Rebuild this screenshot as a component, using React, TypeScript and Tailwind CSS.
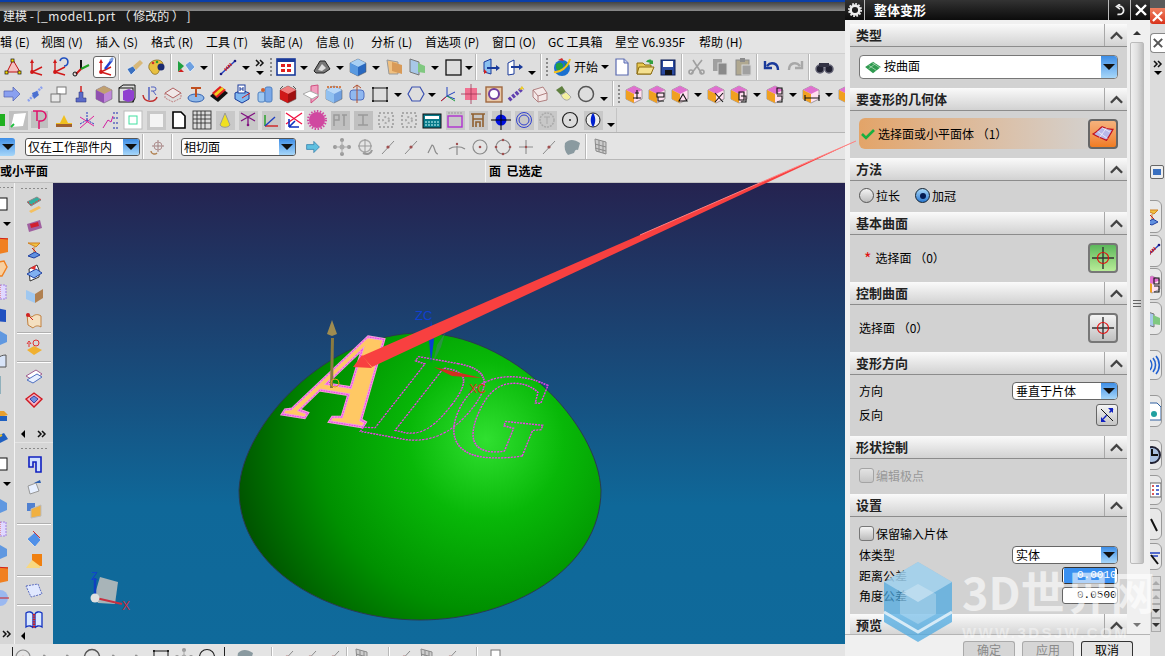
import { ReactNode } from "react";

const cube = (a: string, b: string, c: string) => (
  <>
    <path d="M10 2l8 4v9l-8 4-8-4V6z" fill={c} stroke="#555" strokeWidth=".5" />
    <path d="M10 2l8 4-8 4-8-4z" fill={a} />
    <path d="M2 6l8 4v9l-8-4z" fill={b} />
  </>
);
const axes = (c = "#d01818") => (
  <g stroke={c} strokeWidth="1.4" fill={c}>
    <path d="M6 15V4M6 15l10-5M6 15l10 3" fill="none" />
    <circle cx="6" cy="15" r="1.2" />
    <path d="M6 2l-2 4h4z" stroke="none" />
  </g>
);
const nxCube = (mark: ReactNode) => (
  <>
    {cube("#e070d0", "#f0a020", "#ffe0f0")}
    <g stroke="#111" strokeWidth="1.1" fill="none">{mark}</g>
  </>
);
const gray = "#8b8b8b";
const seg = (a: string) => (
  <>
    <path d="M4 17L16 4" stroke={a} strokeWidth="1" />
    <circle cx="10" cy="10" r="1.6" fill="#a05050" />
  </>
);

const icons: Record<string, ReactNode> = {
  wcs: (<><path d="M4 15L10 3l7 12z" fill="#f4c0c0" stroke="#c01010" /><g fill="#ffdd00" stroke="#111" strokeWidth=".7"><rect x="2" y="14" width="3" height="3" /><rect x="15" y="14" width="3" height="3" /><rect x="8" y="2" width="3" height="3" /></g></>),
  ax1: axes(),
  ax2: (<>{axes()}<path d="M11 4a4 4 0 1 1 4 5" stroke="#2050c0" strokeWidth="1.6" fill="none" /></>),
  ax3: (<><path d="M9 12V3" stroke="#111" strokeWidth="2" /><path d="M9 12l8-4" stroke="#20a020" strokeWidth="2" /><path d="M9 12l-5 5" stroke="#d01818" strokeWidth="2" /><circle cx="3" cy="17" r="2" fill="none" stroke="#111" /></>),
  ax4: (<>{axes()}<path d="M10 12l7-9" stroke="#2040d0" strokeWidth="2.5" /><path d="M15 4l3-3" stroke="#80a0e0" strokeWidth="2.5" /></>),
  pen: (<><path d="M3 12l6-3 3 4-5 5z" fill="#3a70c0" stroke="#fff" strokeWidth=".6" /><path d="M9 9l7-6 3 3-7 7z" fill="#d8b878" /></>),
  pal: (<><path d="M2 8c2-6 13-7 14-1 1 4-3 4-4 7-1 4-5 4-7 2-1-3-4-3-3-8z" fill="#e8c040" stroke="#806010" strokeWidth=".7" /><circle cx="14" cy="10" r="3.5" fill="#1a2a70" /><circle cx="6" cy="6" r="1.3" fill="#d03030" /><circle cx="10" cy="5" r="1.3" fill="#30a030" /></>),
  play: (<><path d="M2 4l6 5-6 6z" fill="#20a040" /><path d="M2 15l3-3 3 3z" fill="#d02020" /><path d="M9 8l5-4 5 6-5 5z" fill="#6ea0e0" stroke="#fff" strokeWidth=".6" /></>),
  lin: (<><path d="M3 17L17 4" stroke="#2040c0" strokeWidth="1.4" /><path d="M7 13l6-6" stroke="#d01818" strokeWidth="3" strokeDasharray="1.4 1" /><circle cx="3" cy="17" r="1.3" fill="#1a1a80" /><circle cx="17" cy="4" r="1.3" fill="#1a1a80" /></>),
  win: (<><rect x="1" y="2" width="18" height="16" fill="#fff" stroke="#1a3a9a" strokeWidth="1.6" /><rect x="1" y="2" width="18" height="3" fill="#1a3a9a" /><g fill="#e02020"><rect x="5" y="7" width="4" height="3" /><rect x="11" y="7" width="4" height="3" /><rect x="5" y="12" width="4" height="3" /><rect x="11" y="12" width="4" height="3" /></g></>),
  lay: (<><path d="M2 14l6-10h5l5 8-6 4H4z" fill="#777" stroke="#222" /><path d="M6 13l4-6 4 4-4 3z" fill="#ddd" /></>),
  bcube: cube("#a8d0f4", "#5a9ae0", "#2868c0"),
  tan: (<><path d="M3 3l11 2v12L5 17z" fill="#f0c080" stroke="#999" /><path d="M8 5l10 3v9l-10-3z" fill="#d89a58" /></>),
  gsh: (<><path d="M3 2l9 3v13l-9-3z" fill="#a8c8e8" stroke="#777" /><path d="M11 6l7 3v7l-7-1z" fill="#80c880" /></>),
  rect: (<rect x="3" y="3" width="15" height="15" fill="#ddd" stroke="#111" strokeWidth="1.3" />),
  fr1: (<><path d="M3 5l7-3v15l-7-2z" fill="#8ac0f0" stroke="#1a3a9a" /><path d="M6 11h10" stroke="#1a3a9a" strokeWidth="2" /><path d="M15 8l4 3-4 3z" fill="#1a3a9a" /><path d="M3 12l3 3-3 2z" fill="#d02020" /></>),
  fr2: (<><path d="M4 6l6-3v14l-6 1z" fill="#fff" stroke="#1a3a9a" /><path d="M7 10h9" stroke="#1a3a9a" strokeWidth="2" /><path d="M15 7l4 3-4 3z" fill="#1a3a9a" /></>),
  globe: (<><circle cx="10" cy="11" r="8" fill="#1a70d0" /><path d="M4 7c5-3 9 0 6 5-2 3-5 2-6-1zM12 5l5 4-3 2z" fill="#20a040" /><path d="M2 15C8 16 16 10 18 2" stroke="#f0c020" strokeWidth="2" fill="none" /><path d="M6 3l4-2 2 3z" fill="#d03030" /></>),
  doc: (<><path d="M4 2h8l4 4v12H4z" fill="#fff" stroke="#5a6ab0" strokeWidth="1.2" /><path d="M12 2v4h4" fill="#c8d0f0" stroke="#5a6ab0" /></>),
  fold: (<><path d="M2 6h6l2 2h6v9H2z" fill="#e8c850" stroke="#8a6a10" /><path d="M4 10h15l-3 7H2z" fill="#f4e090" stroke="#8a6a10" /><path d="M11 5c2-3 5-3 6-1l1-1v4h-4l1-1c-1-1-3-1-4-1z" fill="#30a040" /></>),
  save: (<><rect x="3" y="3" width="14" height="15" fill="#2a4aa0" stroke="#0a1a50" /><rect x="5" y="4" width="10" height="6" fill="#fff" /><rect x="7" y="13" width="7" height="5" fill="#111" /></>),
  cut: (<g stroke="#a0a0a0" strokeWidth="1.6" fill="none"><path d="M4 17L15 3M15 17L6 3" /><circle cx="4" cy="15" r="2" /><circle cx="15" cy="15" r="2" /></g>),
  copy: (<><rect x="3" y="2" width="9" height="12" fill="#a0a0a0" /><rect x="8" y="6" width="9" height="12" fill="#8a8a8a" stroke="#d8d8d8" /></>),
  paste: (<><rect x="3" y="3" width="13" height="15" fill="#b0a890" stroke="#8a8a8a" /><rect x="7" y="1" width="5" height="4" fill="#8a8a8a" /><rect x="9" y="8" width="9" height="10" fill="#a0a0a0" stroke="#d8d8d8" /></>),
  undo: (<path d="M5 9c4-5 11-3 11 4M3 4v7h7" stroke="#1a3a9a" strokeWidth="2.4" fill="none" />),
  redo: (<path d="M15 9c-4-5-11-3-11 4M17 4v7h-7" stroke="#a8a8a8" strokeWidth="2.4" fill="none" />),
  bino: (<><circle cx="6" cy="12" r="4" fill="#223" stroke="#667" strokeWidth="1.5" /><circle cx="15" cy="12" r="4" fill="#223" stroke="#667" strokeWidth="1.5" /><path d="M5 6h10v4H5z" fill="#334" /></>),
  arrow: (<path d="M2 7h9V3l7 7-7 7v-4H2z" fill="#8aa0f0" stroke="#5060b0" strokeWidth=".7" />),
  dia: (<><path d="M3 17L17 3" stroke="#8aa0f0" strokeWidth="2.5" strokeDasharray="2 1" /><path d="M7 9l5-2 2 4-5 4z" fill="#4a70d0" /></>),
  sq2: (<><rect x="9" y="3" width="9" height="7" fill="#fff" stroke="#777" /><rect x="3" y="10" width="9" height="8" fill="#e8e8e8" stroke="#777" /></>),
  ped: (<><path d="M5 18v-4h3V8h4v6h3v4z" fill="#5a6ac8" stroke="#333a80" strokeWidth=".6" /><path d="M10 8V2" stroke="#d02020" strokeWidth="1.5" /></>),
  pur: cube("#c0a070", "#9050b0", "#c088d8"),
  purf: (<><rect x="2" y="4" width="14" height="14" fill="none" stroke="#111" /><path d="M6 7l6-2 5 2v9l-6 2-5-2z" fill="#9040d0" /><path d="M2 4l4-3h12v13l-2 4" fill="none" stroke="#111" /></>),
  arc: (<><path d="M3 11c1 8 12 8 14 2" stroke="#c03030" strokeWidth="1.5" fill="none" /><path d="M9 16V3" stroke="#5060c0" strokeWidth="1.5" /><path d="M11 3h3a2 2 0 0 1 0 4h-3m2 0l3 4" stroke="#5060c0" fill="none" /></>),
  hat: (<><path d="M2 9l8-5 8 5-8 5z" fill="#f0e8e8" stroke="#b06060" /><path d="M2 9v5l8 4 8-4V9" fill="none" stroke="#c08080" strokeDasharray="2 1" /></>),
  rev: (<><ellipse cx="10" cy="14" rx="8" ry="4" fill="#90b8e8" stroke="#3060b0" /><path d="M10 13V4M5 4h10" stroke="#c05020" strokeWidth="2" /></>),
  strip: (<><path d="M1 12l10-9 8 6-10 9z" fill="#111" /><path d="M3 9l8-7 6 4-9 8z" fill="#e02020" /><path d="M5 10l8-7 2 2-8 7z" fill="#f0d020" /></>),
  bh: (<><path d="M3 9l7-3 7 3v6l-7 4-7-4z" fill="#80b8f0" stroke="#1a3a9a" /><rect x="6" y="1" width="7" height="8" fill="#fff" stroke="#1a3a9a" /><path d="M8 3v4M11 3v4M8 5h3" stroke="#1a3a9a" /><path d="M10 14l8-5" stroke="#d02020" /></>),
  cyl: (<><rect x="3" y="8" width="7" height="10" rx="2" fill="#a0c8f0" stroke="#5080c0" /><rect x="10" y="3" width="7" height="15" rx="2" fill="#7aa8e8" stroke="#5080c0" /><circle cx="8" cy="6" r="2" fill="#d06030" /></>),
  rcube: (<>{cube("#f08080", "#d01818", "#a01010")}<path d="M2 5l3-3M18 5l-3-3" stroke="#555" /></>),
  pln: (<><path d="M10 2l7-1v12l-7 6z" fill="#f0a0c0" stroke="#d05080" /><path d="M2 10l7-3 9 4-7 4z" fill="#fff" stroke="#aaa" /></>),
  dim: (<>{cube("#b8d8f8", "#90c0f0", "#70a0e0")}<path d="M3 3h14" stroke="#d06020" strokeWidth="1.3" strokeDasharray="2 1" /></>),
  cdim: (<><rect x="3" y="6" width="14" height="10" rx="3" fill="#90b8f0" stroke="#5070c0" /><path d="M10 1v18M6 4l4-3 4 3" stroke="#b05030" fill="none" /></>),
  sqk: (<><rect x="3" y="4" width="14" height="13" fill="none" stroke="#444" strokeWidth="1.3" /><g fill="#222"><rect x="2" y="3" width="2" height="2" /><rect x="16" y="3" width="2" height="2" /><rect x="2" y="16" width="2" height="2" /><rect x="16" y="16" width="2" height="2" /></g></>),
  hex: (<path d="M6 3h8l4 7-4 7H6l-4-7z" fill="none" stroke="#3a50b0" strokeWidth="1.2" />),
  xyz: (<><path d="M9 12V3M9 12l8 3M9 12l-6 5M9 12l8-4" stroke="#2040c0" /><path d="M3 17l5-4" stroke="#d02020" /><path d="M9 12l8 5" stroke="#20a040" /></>),
  pk: (<><rect x="4" y="4" width="12" height="12" fill="#f07090" /><path d="M10 0v20M0 10h20" stroke="#a03050" strokeWidth=".8" /></>),
  rc: (<><rect x="2" y="3" width="16" height="15" fill="#e8c8a8" stroke="#a06840" strokeWidth="1.4" /><circle cx="10" cy="10" r="5" fill="#fff" stroke="#7040a0" strokeWidth="2" /></>),
  vi: (<><path d="M2 16L16 4" stroke="#6040b0" strokeWidth="4" strokeDasharray="3 1.5" /><path d="M12 6l3-4 2 3z" fill="#f0d020" /></>),
  bx: (<><path d="M3 6l10-3 4 6v7l-9 2-5-5z" fill="#f4e8e8" stroke="#b08080" /><path d="M3 6l5 6v6M8 12l9-3" stroke="#b08080" fill="none" /></>),
  bulb: (<><path d="M3 6l6-4 4 6-5 3z" fill="#608040" /><path d="M8 11l5-3 5 5c-2 4-7 5-10-2z" fill="#f4f0a0" stroke="#aaa" /></>),
  circ: (<circle cx="10" cy="10" r="7.5" fill="none" stroke="#555" strokeWidth="1.5" />),
  c1: nxCube(<path d="M13 6v9M9 14h8M11 9h4" />),
  c2: nxCube(<path d="M10 9h7v4h-7zM11 13v4h6" />),
  c3: nxCube(<path d="M9 17l4-7 4 7z" />),
  c4: nxCube(<path d="M9 9l8 9M17 9l-8 9" />),
  c5: nxCube(<path d="M10 8h5v8h-5zM12 12h5v6h-5" />),
  c6: nxCube(<path d="M12 4h5v6h-5zM12 12h5v6h-5" />),
  c7: nxCube(<path d="M4 14h14M4 11v6M18 11v6" />),
  gsq: (<path d="M15 4h5v12h-5z" fill="#20b020" />),
  gplane: (<><rect x="1" y="1" width="19" height="19" fill="#c0c0c0" /><path d="M3 17l12-1 3-13-12 1z" fill="#fff" /><path d="M3 17l3-3" stroke="#20c040" strokeWidth="2" /></>),
  pp: (<><rect x="0" y="1" width="17" height="17" fill="#c0c0c0" /><path d="M2 1h8a5 5 0 0 1 0 10H8v8M6 1v10" fill="none" stroke="#e0106a" strokeWidth="1.5" /></>),
  mnd: (<><path d="M2 16h16v-3H2zM6 13l4-8 4 8z" fill="#f0c020" /><rect x="2" y="14" width="16" height="3" fill="#a06030" /></>),
  dtr: (<><path d="M10 10V2M10 10l-7 4M10 10l7 4" stroke="#2030c0" strokeDasharray="2 1" /><path d="M3 7l14 9M3 18L17 6" stroke="#e0209a" /></>),
  drs: (<><path d="M3 18l5-8 3 2 2-6" stroke="#d020a0" fill="none" /><g stroke="#1a2ab0" strokeDasharray="2 1"><path d="M13 3h6M13 8h6M13 13h6M13 18h6" /></g></>),
  gbox: (<><rect x="1" y="1" width="18" height="18" fill="#fff" stroke="#bbb" /><rect x="6" y="6" width="8" height="8" fill="none" stroke="#40e0a0" /></>),
  gcube: (<><rect x="1" y="1" width="19" height="19" fill="#c8c8c8" /><rect x="4" y="4" width="13" height="13" fill="#f4f4f4" /></>),
  page: (<path d="M4 2h8l4 4v12H4z" fill="#fff" stroke="#000" strokeWidth="1.6" />),
  grid: (<g stroke="#333" strokeWidth=".9" fill="none"><rect x="1" y="1" width="18" height="18" /><path d="M5 1v18M9 1v18M13 1v18M1 5h18M1 9h18M1 13h18" /></g>),
  ycone: (<><rect x="1" y="1" width="19" height="19" fill="#c8c8c8" /><path d="M10 3l5 12c-2 3-8 3-10 0z" fill="#f0e020" stroke="#999" /></>),
  xpt: (<><rect x="1" y="1" width="19" height="19" fill="#c8c8c8" /><path d="M3 3l14 8M17 3L3 11M10 7v9" stroke="#801080" strokeWidth="1.3" /><circle cx="10" cy="15" r="1.3" fill="#801080" /></>),
  tri: (<><rect x="1" y="1" width="19" height="19" fill="#c8c8c8" /><path d="M4 16V5" stroke="#20a020" strokeWidth="1.4" /><path d="M4 16h13" stroke="#d02020" strokeWidth="1.4" /><path d="M4 16l10-9" stroke="#2040c0" strokeWidth="1.4" /></>),
  rbx: (<><rect x="1" y="1" width="19" height="19" fill="#fff" /><path d="M2 3l16 11M18 3L2 14" stroke="#f01040" strokeWidth="1.3" /><path d="M5 17l6-6M5 17h10M5 9v8" stroke="#1030c0" strokeWidth="1.6" /></>),
  gear: (<><circle cx="10" cy="10" r="8" fill="#d048a0" /><circle cx="10" cy="10" r="9" fill="none" stroke="#d048a0" strokeWidth="2" strokeDasharray="1.5 1.5" /></>),
  gA: (<><rect x="1" y="1" width="19" height="19" fill="#c0c0c0" /><path d="M4 16V5h5v5H4M12 5h5M14 5v11" stroke="#999" strokeWidth="1.5" fill="none" /></>),
  gB: (<><rect x="1" y="1" width="19" height="19" fill="#c0c0c0" /><path d="M5 5h10M5 15h10M10 5v10" stroke="#999" strokeWidth="1.5" /></>),
  gC: (<g stroke="#aaa" strokeWidth="2" strokeDasharray="2 2" fill="none"><rect x="3" y="3" width="14" height="14" /><circle cx="10" cy="10" r="3" /></g>),
  calc: (<><rect x="1" y="4" width="18" height="14" fill="#087a8a" stroke="#111" /><rect x="3" y="6" width="14" height="3" fill="#fff" /><path d="M3 12h14M3 15h14" stroke="#cff" strokeDasharray="2 1" /></>),
  prect: (<><rect x="1" y="1" width="19" height="19" fill="#c8c8c8" /><path d="M3 3h14" stroke="#999" strokeDasharray="2 1" /><rect x="3" y="6" width="14" height="11" fill="none" stroke="#b030d0" strokeWidth="1.4" /></>),
  gate: (<><rect x="1" y="1" width="19" height="19" fill="#c8c8c8" /><path d="M3 4h14M5 4v13M15 4v13M5 9h10M8 17v-5h4v5" stroke="#906030" strokeWidth="1.6" fill="none" /></>),
  bdot: (<><rect x="1" y="1" width="19" height="19" fill="#c8c8c8" /><circle cx="10" cy="10" r="5.5" fill="#0010e0" /><path d="M10 0v20M0 10h20" stroke="#000" /></>),
  bring: (<><rect x="1" y="1" width="19" height="19" fill="#c8c8c8" /><circle cx="10" cy="10" r="7.5" fill="none" stroke="#3040d0" /><circle cx="10" cy="10" r="5" fill="none" stroke="#3040d0" /></>),
  gring: (<><rect x="1" y="1" width="19" height="19" fill="#c8c8c8" /><circle cx="10" cy="10" r="7" fill="none" stroke="#aaa" strokeWidth="1.5" strokeDasharray="2 1" /><path d="M7 7h6M10 7v7" stroke="#aaa" /></>),
  cdot: (<><circle cx="10" cy="10" r="7.5" fill="none" stroke="#222" strokeWidth="1.2" /><circle cx="10" cy="10" r="1" fill="#222" /></>),
  lens: (<><rect x="1" y="1" width="19" height="19" fill="#c8c8c8" /><circle cx="10" cy="10" r="7" fill="#eee" stroke="#222" /><path d="M10 3c3 4 3 10 0 14-3-4-3-10 0-14z" fill="#0020d0" /></>),
  sm: (<><circle cx="10" cy="10" r="2.5" fill="#aaa" /><g fill="#999"><circle cx="10" cy="3" r="2" /><circle cx="10" cy="17" r="2" /><circle cx="3" cy="10" r="2" /><circle cx="17" cy="10" r="2" /></g><path d="M10 3v14M3 10h14" stroke="#aaa" /></>),
  sm2: (<><circle cx="10" cy="9" r="6" fill="none" stroke="#aaa" strokeWidth="1.5" /><path d="M10 2v14M3 9h14" stroke="#999" /><path d="M8 16c4 2 8 1 9-3" stroke="#999" fill="none" strokeWidth="2" /></>),
  seg: seg(gray),
  cpt: (<><path d="M4 16l4-8c3 0 2 9 6 9" stroke={gray} fill="none" strokeWidth="1.2" /></>),
  tee: (<><path d="M2 12c4-3 12-3 16 0M10 9v9" stroke={gray} fill="none" strokeWidth="1.2" /><circle cx="10" cy="7" r="1.2" fill="#a05050" /></>),
  c2p: (<><circle cx="10" cy="10" r="7" fill="none" stroke={gray} strokeWidth="1.2" /><circle cx="10" cy="10" r="1.3" fill="#a05050" /></>),
  c4p: (<><circle cx="10" cy="10" r="7" fill="none" stroke={gray} strokeWidth="1.2" /><g fill="#a05050"><circle cx="10" cy="3" r="1.3" /><circle cx="10" cy="17" r="1.3" /><circle cx="3" cy="10" r="1.3" /><circle cx="17" cy="10" r="1.3" /></g></>),
  plus: (<><path d="M10 3v14M3 10h14" stroke={gray} strokeWidth="1.1" /><circle cx="10" cy="10" r="1.2" fill="#a05050" /></>),
  srf: (<path d="M3 6c4-4 9-4 15 0l-2 7c-2-1-3 0-4 3l-6 2c-3-3-4-7-3-12z" fill="#8a9aa0" />),
  gr: (<g stroke={gray} fill="#ccc"><path d="M4 2l11 3v12L5 14z" /><path d="M8 3v12M12 4v12M4 7l11 3M4 11l11 3" fill="none" /></g>),
  cen: (<><path d="M10 3v12M4 9h12" stroke="#a08080" /><circle cx="10" cy="9" r="4" fill="none" stroke="#b09090" /><path d="M3 14c0 3 4 4 6 2" stroke="#b08050" fill="none" strokeWidth="1.4" /></>),
  sa: (<><path d="M3 8l10-5 4 3-10 6z" fill="#30b0a0" stroke="#888" /><path d="M4 8l3 3 10-6" stroke="#e04040" strokeDasharray="2 1" fill="none" /><path d="M5 17l10-5 2 2-10 5z" fill="#f4c060" /></>),
  sb: (<><path d="M3 7l13-4 2 8-13 4z" fill="#a060a0" /><path d="M6 7l8-2 1 4-8 2z" fill="#d02030" /></>),
  sc: (<><path d="M4 3h12l-4 4zM10 7v6" fill="#f0c040" stroke="#d08020" /><path d="M4 16l7-4 5 3-6 3z" fill="#6090e0" stroke="#2040a0" /><path d="M8 8l4 4" stroke="#d02020" /></>),
  sd: (<><path d="M5 6l8-4 2 5v7l-9 4z" fill="#fff" stroke="#333" /><path d="M3 11l9-5 6 4-8 5z" fill="#80b0f0" stroke="#2040a0" /><path d="M6 5l6-3-1 5z" fill="#e03030" /></>),
  se: (<><path d="M2 4l9 4v9l-9-4z" fill="#a0c8f0" /><path d="M11 8l8-5v9l-8 5z" fill="#b08050" /></>),
  sf: (<><path d="M3 5l5 3c3-3 6-3 9-1v11c-3-2-6-1-8 1l-5-3z" fill="#f4e0c0" stroke="#c08040" /><circle cx="4" cy="6" r="2" fill="#d02020" /><path d="M4 6l5 5" stroke="#d02020" /></>),
  sg: (<><circle cx="12" cy="5" r="3" fill="none" stroke="#e03030" /><path d="M3 12l7-4 8 4-8 5z" fill="#f0b030" /><path d="M5 9V5M3 6l2-3 2 3" stroke="#e03030" fill="none" /></>),
  sh: (<><path d="M2 9l10-6 6 4-9 6z" fill="#fff" stroke="#a06090" /><path d="M3 13l10-6 5 3-9 6z" fill="#e8f0ff" stroke="#5070c0" /></>),
  si: (<><path d="M2 9l8-6 8 6-8 8z" fill="#f4b0c0" stroke="#d01820" strokeWidth="1.4" /><path d="M6 9l4-3 4 3-4 4z" fill="#7090e0" stroke="#4040a0" /></>),
  u1: (<path d="M5 3h12v15h-5V8H9v5H5z" fill="#d0e0ff" stroke="#1020c0" strokeWidth="1.6" />),
  u2: (<><path d="M4 9l8-3 3 8-9 3z" fill="#e8f0ff" stroke="#999" /><path d="M10 6l6-3 1 3z" fill="#3060b0" /></>),
  u3: (<><rect x="3" y="3" width="8" height="8" fill="#5080d0" /><path d="M7 9l10-4v11l-10 2z" fill="#f0b040" stroke="#bbb" /></>),
  u4: (<><path d="M3 10l8-7 6 8-6 7z" fill="#5090e8" stroke="#ddd" /><path d="M9 2l7 7" stroke="#d03030" strokeWidth="1" /></>),
  u5: (<><path d="M8 2h10v12H8z" fill="#f08010" /><path d="M2 16l6-8 8 6v2z" fill="#f8d880" /></>),
  u6: (<><path d="M2 5l12-2 4 10-11 3z" fill="#e0e8ff" stroke="#6070c0" strokeDasharray="2 1" /></>),
  book: (<><path d="M2 3c3-2 6-1 7 1v14c-1-2-4-3-7-1zM18 3c-3-2-6-1-7 1v14c1-2 4-3 7-1z" fill="#d8e8ff" stroke="#1030c0" strokeWidth="1.3" /><path d="M10 4v14" stroke="#d01818" strokeWidth="2.4" strokeDasharray="1.4 1" /></>),
  o1: (<><path d="M6 2h12v14l-9 2-4-4z" fill="#f08020" /><path d="M6 2l12 1" stroke="#d02020" /></>),
  o2: (<><path d="M4 4l10-2 3 6-5 9H6z" fill="#f8d0a0" stroke="#f08020" strokeWidth="1.4" /></>),
  o3: (<><rect x="4" y="3" width="12" height="14" fill="#e0d8ff" stroke="#a080e0" strokeDasharray="2 1" /><path d="M10 3v14" stroke="#e05050" strokeDasharray="1 1" /></>),
  o4: (<path d="M6 3l10 2v12l-10-1z" fill="#2050c0" />),
  o5: (<path d="M8 2l9 5v7l-9 4-6-6z" fill="#6098e0" />),
  o6: (<><path d="M4 16c0-8 6-12 12-12v12z" fill="#d8e4f8" stroke="#555" /></>),
  o7: (<><path d="M8 2v18" stroke="#4a8aa0" strokeWidth="5" /></>),
  o8: (<><path d="M2 4h12l4 4-8 2z" fill="#e8a030" /><rect x="9" y="9" width="8" height="5" fill="#2060c0" /></>),
  o9: (<><path d="M2 8l12-5 4 6-14 7z" fill="#2060c0" /><path d="M6 8l6-3" stroke="#f0c020" strokeWidth="2" /></>),
  o10: (<rect x="5" y="5" width="12" height="12" fill="#fff" stroke="#111" />),
  o11: (<><circle cx="10" cy="10" r="8" fill="#9ab8f0" /><path d="M5 10h14" stroke="#d02020" /></>),
};

function Icon({ k }: { k: string }) {
  return (
    <svg viewBox="0 0 20 20" className="h-[20px] w-[20px] shrink-0">
      {icons[k]}
    </svg>
  );
}

function Drop() {
  return <div className="h-0 w-0 border-x-[4px] border-t-[4px] border-x-transparent border-t-black" />;
}

function Chevrons() {
  return (
    <svg viewBox="0 0 10 8" className="h-[8px] w-[10px]">
      <path d="M1 1l3 3-3 3M5 1l3 3-3 3" fill="none" stroke="#111" strokeWidth="1.5" />
    </svg>
  );
}

// token row: icon name, "v" dropdown, "|" separator, ":" grip
function Row({ items }: { items: string[] }) {
  return (
    <>
      {items.map((t, i) => {
        if (t === "v")
          return (
            <div key={i} className="flex h-full w-[13px] shrink-0 items-center justify-center pt-[2px]">
              <Drop />
            </div>
          );
        if (t === "vs")
          return (
            <div key={i} className="flex h-full w-[9px] shrink-0 items-center justify-center pt-[2px]">
              <Drop />
            </div>
          );
        if (t === "v2")
          return (
            <div key={i} className="flex h-full w-[13px] shrink-0 items-end justify-center pb-[5px]">
              <Drop />
            </div>
          );
        if (t === "|")
          return <div key={i} className="mx-[2px] h-full w-[2px] shrink-0 border-x border-l-[#b8b8b8] border-r-white" />;
        if (t === ":")
          return (
            <div key={i} className="mx-[2px] flex h-full w-[2px] shrink-0 flex-col justify-center gap-[2px]">
              {[0, 1, 2, 3, 4].map((d) => (
                <div key={d} className="h-[2px] w-[2px] bg-[#8a8a8a]" />
              ))}
            </div>
          );
        if (t === ">>")
          return (
            <div key={i} className="flex h-full w-[16px] shrink-0 flex-col items-center justify-center gap-[4px]">
              <Chevrons />
              <Drop />
            </div>
          );
        if (t === "sel")
          return (
            <div key={i} className="flex h-[22px] w-[23px] shrink-0 items-center justify-center rounded-[3px] border border-[#666] bg-white">
              <Icon k="ax4" />
            </div>
          );
        if (t === "start")
          return (
            <div key={i} className="flex h-full w-[37px] shrink-0 items-center gap-[3px] whitespace-nowrap pl-[1px] text-[12px] text-black">
              开始
              <Drop />
            </div>
          );
        return (
          <div key={i} className="flex h-full w-[23px] shrink-0 items-center justify-center">
            <Icon k={t} />
          </div>
        );
      })}
    </>
  );
}

function TopSelect({ label, width }: { label: string; width: string }) {
  return (
    <div className={`flex h-[18px] ${width} shrink-0 overflow-hidden rounded-[3px] border border-[#555] bg-white`}>
      <span className="flex-1 pl-[2px] text-[12px] leading-[15px] text-black">{label}</span>
      <BlueBtn />
    </div>
  );
}

function BlueBtn() {
  return (
    <div className="flex h-full w-[16px] shrink-0 items-center justify-center bg-gradient-to-b from-[#3d8ee6] to-[#a6d6f8]">
      <div className="h-0 w-0 border-x-[6px] border-t-[6px] border-x-transparent border-t-[#111]" />
    </div>
  );
}

const menus: [string, string][] = [
  ["辑 (E)", "w-[41px]"],
  ["视图 (V)", "w-[55px]"],
  ["插入 (S)", "w-[55px]"],
  ["格式 (R)", "w-[55px]"],
  ["工具 (T)", "w-[55px]"],
  ["装配 (A)", "w-[55px]"],
  ["信息 (I)", "w-[55px]"],
  ["分析 (L)", "w-[54px]"],
  ["首选项 (P)", "w-[67px]"],
  ["窗口 (O)", "w-[56px]"],
  ["GC 工具箱", "w-[67px]"],
  ["星空 V6.935F", "w-[84px]"],
  ["帮助 (H)", "w-[60px]"],
];

const row1 = ["wcs", "ax1", "ax2", "ax3", "sel", "|", "pen", "pal", "|", "play", "v", "|", "lin", "v", ">>", ":", "win", "v", "lay", "v", "bcube", "v", "tan", "gsh", "v", "rect", "vs", "|", "fr1", "fr2", "v2", "|", ":", "globe", "start", "doc", "fold", "save", "|", "cut", "copy", "paste", "|", "undo", "redo", "|", "bino"];
const row2 = ["arrow", "dia", "sq2", "ped", "pur", "purf", "arc", "hat", "rev", "strip", "bh", "cyl", "rcube", "pln", "dim", "cdim", "sqk", "v", "hex", "vs", "xyz", "pk", "rc", "vi", "bx", "bulb", "circ", "v2", "|", ":", "c1", "c2", "c3", "v", "c4", "c5", "v", "c6", "v", "c7", "v", "c1"];
const row3 = ["gsq", "gplane", "pp", "mnd", "dtr", "drs", "gbox", "gcube", "page", "grid", "ycone", "xpt", "tri", "rbx", "gear", "gA", "gB", "gC", "gC", "calc", "prect", "gate", "bdot", "bring", "gring", "cdot", "lens", "v2"];
const row4 = ["sm", "sm2", "seg", "seg", "cpt", "tee", "c2p", "c4p", "plus", "seg", "srf", "|", "gr"];
const sideA = ["sa", "sb", "sc", "sd", "se", "sf"];
const sideB = ["u1", "u2", "u3"];

function VIcons({ items }: { items: string[] }) {
  return (
    <>
      {items.map((k, i) => (
        <div key={i} className="flex h-[23px] w-full items-center justify-center">
          <Icon k={k} />
        </div>
      ))}
    </>
  );
}

function HLine() {
  return <div className="mx-[1px] my-[2px] h-[2px] border-y border-t-[#b0b0b0] border-b-white" />;
}

function Grip() {
  return (
    <div className="flex h-[8px] items-center justify-center gap-[2px]">
      {[0, 1, 2, 3, 4, 5, 6].map((d) => (
        <div key={d} className="h-[1px] w-[2px] bg-[#8a8a8a]" />
      ))}
    </div>
  );
}

function LeftBar() {
  return (
    <div className="flex h-full w-[53px] shrink-0 bg-[#e4e4e4]">
      {/* clipped toolbar on the far left */}
      <div className="relative w-[15px] shrink-0 overflow-hidden border-r border-[#f4f4f4] bg-[#d6d6d6]">
        <div className="-ml-[12px] flex h-full w-[24px] flex-col items-center">
          <Grip />
          <VIcons items={["o10"]} />
          <div className="flex h-[20px] items-center pl-[14px]"><Drop /></div>
          <VIcons items={["o1", "o2", "o3", "o4", "o5", "o6", "o7"]} />
          <HLine />
          <div className="h-[4px]" />
          <VIcons items={["o8", "o9", "o10"]} />
          <div className="flex h-[20px] items-center pl-[14px]"><Drop /></div>
          <VIcons items={["o5", "o3", "o5", "o1", "o11"]} />
          <div className="mt-auto flex h-[20px] items-center pl-[14px]"><Chevrons /></div>
        </div>
      </div>
      <div className="flex w-[38px] shrink-0 flex-col gap-[1px]">
        <div className="flex h-[259px] shrink-0 flex-col bg-[#d6d6d6] px-[1px] pt-[1px]">
          <Grip />
          <VIcons items={sideA} />
          <HLine />
          <VIcons items={["sg"]} />
          <HLine />
          <VIcons items={["sh", "si"]} />
          <div className="mt-auto flex items-center justify-between px-[5px] pb-[4px]">
            <div className="h-0 w-0 border-y-[4px] border-r-[4px] border-y-transparent border-r-black" />
            <Chevrons />
          </div>
        </div>
        <div className="flex flex-1 flex-col bg-[#d6d6d6] px-[1px] pt-[1px]">
          <Grip />
          <VIcons items={sideB} />
          <HLine />
          <VIcons items={["u4", "u5"]} />
          <HLine />
          <VIcons items={["u6"]} />
          <HLine />
          <VIcons items={["book"]} />
          <div className="mt-auto flex items-center px-[5px] pb-[4px]">
            <div className="h-0 w-0 border-y-[4px] border-r-[4px] border-y-transparent border-r-black" />
          </div>
        </div>
      </div>
    </div>
  );
}

function Scene() {
  const letter = "#f03cf0";
  return (
    <svg viewBox="53 183 792 461" className="block h-full w-full">
      <defs>
        <linearGradient id="sky" x1="0" y1="0" x2="0" y2="1">
          <stop offset="0" stopColor="#252350" />
          <stop offset="0.7" stopColor="#0f6899" />
          <stop offset="1" stopColor="#0f6a9b" />
        </linearGradient>
        <radialGradient id="dome" gradientUnits="userSpaceOnUse" cx="486" cy="440" r="260">
          <stop offset="0" stopColor="#30e030" />
          <stop offset="0.3" stopColor="#08b808" />
          <stop offset="0.65" stopColor="#009000" />
          <stop offset="1" stopColor="#005000" />
        </radialGradient>
      </defs>
      <rect x="53" y="183" width="792" height="461" fill="url(#sky)" />
      <path
        d="M239 490C242 424 328 333 420 333C512 333 598 424 601 490C601 570 510 620 420 620C330 620 239 570 239 490Z"
        fill="url(#dome)"
        stroke="#2a3a50"
      />
      {/* letters lying on the dome */}
      <g fontFamily="Liberation Serif, serif" fontWeight="700">
        <text
          transform="translate(281 414) rotate(9) skewX(-24) scale(.85 1)"
          fontSize="136"
          fill="#ffc864"
          stroke="#f4a0d8"
          strokeWidth="3"
        >
          A
        </text>
        <text
          transform="translate(281 414) rotate(9) skewX(-24) scale(.85 1)"
          fontSize="136"
          fill="none"
          stroke={letter}
          strokeWidth="1"
          strokeDasharray="2 1"
        >
          A
        </text>
        <text
          transform="translate(358 431) rotate(10) skewX(-28)"
          fontSize="128"
          fill="none"
          stroke={letter}
          strokeWidth="1.4"
          strokeDasharray="2 1"
        >
          D
        </text>
        <text
          transform="translate(436 451) rotate(6) skewX(-16)"
          fontSize="124"
          fill="none"
          stroke={letter}
          strokeWidth="1.4"
          strokeDasharray="2 1"
        >
          G
        </text>
      </g>
      {/* work triad */}
      <path d="M431 320l3 20-3 23-2-23z" fill="#0a3ed0" />
      <path d="M445 333l-4 14-8 16 4-18z" fill="#3a8a5a" opacity=".7" />
      <path d="M434 367l48 11-30-2z" fill="#d03020" />
      <text x="415" y="320" fontFamily="Liberation Sans, sans-serif" fontSize="13" fill="#1040d0">ZC</text>
      <text x="469" y="393" fontFamily="Liberation Sans, sans-serif" fontSize="12" fill="#d04010">XC</text>
      {/* brown direction arrow */}
      <path d="M330 388l1-50 3 0-1 50z" fill="#8a7a40" />
      <path d="M332 320l5 14-5 2-5-2z" fill="#a08c50" />
      <circle cx="335" cy="383" r="4" fill="none" stroke="#e0a020" />
      {/* corner triad */}
      <path d="M100 577l18 5-3 22-17-1-4-6z" fill="#a8b4b8" />
      <path d="M95 597V578" stroke="#1040c0" strokeWidth="2.5" />
      <path d="M96 598l26 6" stroke="#c83040" strokeWidth="2" />
      <circle cx="95" cy="598" r="4.5" fill="#e0e0e0" />
      <text x="91" y="580" fontFamily="Liberation Sans, sans-serif" fontSize="11" fill="#1040d0">Z</text>
      <text x="122" y="610" fontFamily="Liberation Sans, sans-serif" fontSize="12" fill="#c83040">X</text>
    </svg>
  );
}

function Chevron() {
  return (
    <svg viewBox="0 0 14 9" className="h-[9px] w-[13px]">
      <path d="M1 8l6-6 6 6" fill="none" stroke="#444" strokeWidth="2.6" />
    </svg>
  );
}

function Section({ title, body, children }: { title: string; body: string; children?: ReactNode }) {
  return (
    <>
      <div className="flex h-[22px] shrink-0 bg-gradient-to-b from-[#fafafa] to-[#d2d2d2]">
        <span className="flex-1 pl-[6px] text-[13px] font-bold leading-[22px] text-[#222]">{title}</span>
        <div className="flex w-[23px] items-center justify-center border-l border-[#a8a8a8]">
          <Chevron />
        </div>
      </div>
      <div className={`${body} shrink-0 border-t-[1px] border-[#8c8c8c] bg-[#d2d2d2] px-[9px]`}>{children}</div>
    </>
  );
}

function Target({ tone }: { tone: string }) {
  return (
    <div className={`flex h-[30px] w-[30px] shrink-0 items-center justify-center rounded-[4px] border-2 border-[#777] ${tone}`}>
      <svg viewBox="0 0 24 24" className="h-[24px] w-[24px]">
        <path d="M12 1v22M1 12h22" stroke="#333" strokeWidth="1.4" />
        <circle cx="12" cy="12" r="5.5" fill="none" stroke="#e01010" strokeWidth="1.2" />
      </svg>
    </div>
  );
}

function Box({ className }: { className?: string }) {
  return (
    <div className={`h-[15px] w-[15px] shrink-0 rounded-[3px] border border-[#777] bg-gradient-to-b from-[#f4f4f4] to-[#bcbcbc] ${className ?? ""}`} />
  );
}

function Select({ label, w }: { label: string; w: string }) {
  return (
    <div className={`ml-auto flex h-[18px] ${w} overflow-hidden rounded-[4px] border border-[#666] bg-white`}>
      <span className="flex-1 pl-[3px] text-[12px] leading-[15px] text-black">{label}</span>
      <BlueBtn />
    </div>
  );
}

function Dialog() {
  return (
    <div className="relative z-10 flex h-full w-[305px] shrink-0 flex-col bg-[#f0f0f0]">
      <div className="flex h-[20px] shrink-0 items-center bg-gradient-to-b from-[#333] to-[#0c0c0c] text-white">
        <div className="flex h-full w-[20px] items-center justify-center border-r border-[#bbb]">
          <svg viewBox="0 0 16 16" className="h-[14px] w-[14px]">
            <circle cx="8" cy="8" r="5" fill="none" stroke="#eee" strokeWidth="3" />
            <circle cx="8" cy="8" r="7" fill="none" stroke="#eee" strokeWidth="2" strokeDasharray="2 1.6" />
          </svg>
        </div>
        <span className="flex-1 pl-[9px] text-[13px] font-bold">整体变形</span>
        <div className="flex h-full w-[22px] items-center justify-center border-l border-[#bbb]">
          <svg viewBox="0 0 14 14" className="h-[12px] w-[12px]">
            <path d="M4 12c5 1 8-2 7-6-1-3-4-4-6-3M7 0L3 3l4 3" fill="none" stroke="#eee" strokeWidth="2" />
          </svg>
        </div>
        <div className="flex h-full w-[20px] items-center justify-center border-l border-[#bbb]">
          <svg viewBox="0 0 12 12" className="h-[12px] w-[12px]">
            <path d="M1 1l10 10M11 1L1 11" stroke="#fff" strokeWidth="2.4" />
          </svg>
        </div>
      </div>
      <div className="flex min-h-0 flex-1 pl-[5px] pt-[4px]">
        <div className="flex w-[277px] shrink-0 flex-col overflow-hidden">
          <Section title="类型" body="flex h-[42px] items-center pb-[2px]">
            <div className="flex h-[24px] w-full overflow-hidden rounded-[4px] border border-[#777] bg-white">
              <svg viewBox="0 0 20 16" className="my-auto ml-[4px] h-[14px] w-[18px]">
                <path d="M1 8l9-6 9 6-9 7z" fill="#2f9a50" />
                <path d="M5 6l9 6M9 3l9 6M5 10l8-6" stroke="#cfe8d0" strokeWidth=".7" />
              </svg>
              <span className="flex-1 pl-[2px] text-[12px] leading-[20px] text-black">按曲面</span>
              <BlueBtn />
            </div>
          </Section>
          <Section title="要变形的几何体" body="flex h-[48px] items-center pb-[2px]">
            <div className="flex h-[31px] flex-1 items-center rounded-l-[6px] bg-gradient-to-r from-[#e3a468] to-[#d4d0cc] pl-[2px]">
              <svg viewBox="0 0 14 12" className="h-[12px] w-[14px]">
                <path d="M1 6l4 4 8-8" fill="none" stroke="#18b040" strokeWidth="2.6" />
              </svg>
              <span className="pl-[3px] text-[12px] text-black">选择面或小平面体 （1）</span>
            </div>
            <div className="flex h-[30px] w-[30px] shrink-0 items-center justify-center rounded-[4px] border-2 border-[#666] bg-gradient-to-b from-[#f5b27c] to-[#f07c20]">
              <svg viewBox="0 0 24 20" className="h-[18px] w-[22px]">
                <path d="M1 10c4-2 7-6 10-8 4 2 8 3 12 3-2 4-4 7-7 12-5-2-10-4-15-7z" fill="#b8b8e8" stroke="#c01020" strokeWidth="1.4" />
                <path d="M6 7l11 8M11 3l9 5M8 14l8-11" stroke="#fff" strokeWidth=".7" />
              </svg>
            </div>
          </Section>
          <Section title="方法" body="flex h-[32px] items-center pb-[2px] text-[12px] text-black">
            <div className="h-[15px] w-[15px] shrink-0 rounded-full border border-[#555] bg-gradient-to-b from-[#f4f4f4] to-[#bdbdbd]" />
            <span className="ml-[2px] w-[39px]">拉长</span>
            <div className="flex h-[15px] w-[15px] shrink-0 items-center justify-center rounded-full border border-[#123] bg-gradient-to-b from-[#a8d8f8] to-[#2878d0]">
              <div className="h-[6px] w-[6px] rounded-full bg-[#041a50]" />
            </div>
            <span className="ml-[2px]">加冠</span>
          </Section>
          <Section title="基本曲面" body="flex h-[48px] items-center pb-[2px] text-[12px] text-black">
            <span className="pl-[5px] pr-[4px] text-[16px] leading-none text-[#e01010]">*</span>
            <span className="flex-1">选择面 （0）</span>
            <Target tone="bg-gradient-to-b from-[#5cb85c] to-[#b8ec98]" />
          </Section>
          <Section title="控制曲面" body="flex h-[48px] items-center pb-[2px] text-[12px] text-black">
            <span className="flex-1">选择面 （0）</span>
            <Target tone="bg-gradient-to-b from-[#f4f4f4] to-[#c0c0c0]" />
          </Section>
          <Section title="变形方向" body="h-[62px] pt-[7px] text-[12px] text-black">
            <div className="flex h-[18px] items-center">
              <span>方向</span>
              <Select label="垂直于片体" w="w-[106px]" />
            </div>
            <div className="mt-[4px] flex h-[22px] items-center">
              <span>反向</span>
              <div className="ml-auto flex h-[22px] w-[22px] items-center justify-center rounded-[3px] border border-[#666] bg-gradient-to-b from-[#f4f4f4] to-[#c4c4c4]">
                <svg viewBox="0 0 16 16" className="h-[16px] w-[16px]">
                  <path d="M2 2l12 12" stroke="#111" />
                  <path d="M14 2L2 14" stroke="#1020c0" strokeWidth="1.4" strokeDasharray="5 4" />
                  <path d="M14 1v5l-5-5zM2 15v-5l5 5z" fill="#1020c0" />
                </svg>
              </div>
            </div>
          </Section>
          <Section title="形状控制" body="flex h-[36px] items-center pb-[2px] text-[12px] text-[#989898]">
            <Box className="opacity-50" />
            <span className="ml-[2px]">编辑极点</span>
          </Section>
          <Section title="设置" body="h-[98px] pt-[8px] text-[12px] text-black">
            <div className="flex h-[17px] items-center">
              <Box />
              <span className="ml-[2px]">保留输入片体</span>
            </div>
            <div className="mt-[4px] flex h-[18px] items-center">
              <span>体类型</span>
              <Select label="实体" w="w-[106px]" />
            </div>
            <div className="mt-[3px] flex h-[17px] items-center">
              <span>距离公差</span>
              <div className="ml-auto h-[17px] w-[56px] overflow-hidden rounded-[3px] border border-[#333] bg-white">
                <div className="ml-[1px] mr-[2px] h-full overflow-hidden whitespace-nowrap bg-[#3a90f0] pl-[13px] font-['Liberation_Mono'] text-[11px] leading-[15px] text-white">
                  0.00100
                </div>
              </div>
            </div>
            <div className="mt-[3px] flex h-[17px] items-center">
              <span>角度公差</span>
              <div className="ml-auto h-[17px] w-[56px] overflow-hidden whitespace-nowrap rounded-[3px] border border-[#666] bg-white pl-[14px] font-['Liberation_Mono'] text-[11px] leading-[15px] text-black">
                0.05000
              </div>
            </div>
          </Section>
          <Section title="预览" body="h-[20px]" />
        </div>
        {/* scroll bar */}
        <div className="ml-[1px] flex w-[17px] shrink-0 flex-col items-center">
          <div className="flex h-[18px] items-center justify-center">
            <div className="h-0 w-0 border-x-[4px] border-b-[4px] border-x-transparent border-b-[#333]" />
          </div>
          <div className="flex h-[522px] w-[14px] items-center justify-center rounded-[2px] border border-[#bbb] bg-gradient-to-r from-[#f0f0f0] via-[#e0e0e0] to-[#bdbdbd]">
            <div className="h-[7px] w-[8px] border-y border-[#666] py-[2px]"><div className="h-full border-t border-[#666]" /></div>
          </div>
          <div className="mt-auto flex h-[18px] items-center justify-center">
            <div className="h-0 w-0 border-x-[4px] border-t-[4px] border-x-transparent border-t-[#777]" />
          </div>
        </div>
      </div>
      <div className="flex h-[22px] shrink-0 justify-end gap-[7px] border-t border-[#b4b4b4] pr-[17px] pt-[6px] text-[12px]">
        <div className="w-[52px] rounded-t-[3px] border border-b-0 border-[#aaa] bg-[#d6d6d6] text-center leading-[15px] text-[#8a8a8a]">确定</div>
        <div className="w-[52px] rounded-t-[3px] border border-b-0 border-[#aaa] bg-[#d6d6d6] text-center leading-[15px] text-[#8a8a8a]">应用</div>
        <div className="w-[52px] rounded-t-[3px] border border-b-0 border-[#333] bg-[#e4e4e4] text-center leading-[15px] text-black">取消</div>
      </div>
    </div>
  );
}

function Tab({ h, k, children }: { h: string; k?: string; children?: ReactNode }) {
  return (
    <div className={`${h} -ml-[9px] flex w-[21px] shrink-0 items-center overflow-hidden rounded-r-[6px] border border-[#999] bg-[#e8e8e8]`}>
      {k ? <Icon k={k} /> : children}
    </div>
  );
}

function RightStrip() {
  return (
    <div className="flex h-full w-[15px] shrink-0 flex-col overflow-hidden bg-[#dcdcdc]">
      <div className="h-[8px] shrink-0 bg-[#5a5a5a]" />
      <div className="flex h-[16px] shrink-0 items-center justify-center rounded-bl-[3px] bg-gradient-to-b from-[#f08060] to-[#d83018]">
        <svg viewBox="0 0 12 12" className="h-[11px] w-[11px]">
          <path d="M1 1l10 10M11 1L1 11" stroke="#fff" strokeWidth="2.4" />
        </svg>
      </div>
      <div className="mt-[9px] flex h-[20px] shrink-0 items-center justify-center rounded-l-[4px] border border-r-0 border-[#888] bg-white">
        <svg viewBox="0 0 12 12" className="h-[10px] w-[10px]">
          <path d="M1 1l10 10M11 1L1 11" stroke="#555" strokeWidth="2.4" />
        </svg>
      </div>
      <div className="flex h-[28px] shrink-0 flex-col items-center justify-center gap-[3px]">
        <Chevrons />
        <Drop />
      </div>
      <div className="mt-[84px] flex h-[14px] w-[14px] shrink-0 items-center justify-center rounded-[2px] border border-[#666] bg-[#eee]">
        <div className="h-[6px] w-[8px] bg-[#3a70c0]" />
      </div>
      <div className="mt-[21px] flex flex-col">
        <Tab h="h-[33px]" k="sc" />
        <Tab h="mt-[2px] h-[32px]" k="lin" />
        <Tab h="mt-[1px] h-[32px]" k="c6" />
        <Tab h="mt-[2px] h-[33px]" k="gsh" />
        <Tab h="mt-[15px] h-[30px]">
          <svg viewBox="0 0 20 20" className="h-[20px] w-[20px] shrink-0">
            <path d="M8 5a8 8 0 0 1 0 10M11 3a11 11 0 0 1 0 14M14 1a14 14 0 0 1 0 18" stroke="#2060d0" strokeWidth="1.6" fill="none" />
          </svg>
        </Tab>
        <Tab h="mt-[15px] h-[32px]">
          <svg viewBox="0 0 20 20" className="h-[20px] w-[20px] shrink-0">
            <path d="M6 2h9l4 4v13H6z" fill="#fff" stroke="#3060a0" />
            <circle cx="12" cy="13" r="3" fill="#20a0a0" />
          </svg>
        </Tab>
        <Tab h="mt-[13px] h-[30px]">
          <svg viewBox="0 0 20 20" className="h-[20px] w-[20px] shrink-0">
            <circle cx="10" cy="10" r="8" fill="#a8c0e0" stroke="#223" strokeWidth="2" />
            <path d="M10 4v6h6" stroke="#111" strokeWidth="2" fill="none" />
          </svg>
        </Tab>
        <Tab h="mt-[5px] h-[30px]">
          <svg viewBox="0 0 20 20" className="h-[20px] w-[20px] shrink-0">
            <rect x="8" y="3" width="11" height="14" fill="#fff" stroke="#666" />
            <path d="M10 6h2M10 10h2M10 14h2" stroke="#d02020" strokeWidth="1.6" />
            <path d="M14 6h3M14 10h3M14 14h3" stroke="#2040c0" strokeWidth="1.6" />
          </svg>
        </Tab>
        <Tab h="mt-[3px] h-[32px]">
          <svg viewBox="0 0 20 20" className="h-[20px] w-[20px] shrink-0">
            <path d="M9 5l6 12" stroke="#111" strokeWidth="2" />
          </svg>
        </Tab>
        <Tab h="mt-[3px] h-[27px]">
          <svg viewBox="0 0 20 20" className="h-[20px] w-[20px] shrink-0">
            <path d="M8 6h10M10 9h6" stroke="#2040c0" strokeWidth="1.4" />
            <path d="M9 8l7 9" stroke="#111" strokeWidth="2" />
          </svg>
        </Tab>
      </div>
      <div className="mt-[6px] flex flex-col items-start pl-[1px]">
        {[0, 1].map((i) => (
          <div key={i} className="flex h-[14px] w-[10px] items-center justify-center border border-[#aaa] bg-[#d8d8d8]">
            <div className="h-0 w-0 border-x-[4px] border-b-[4px] border-x-transparent border-b-[#aaa]" />
          </div>
        ))}
        {[0, 1].map((i) => (
          <div key={i} className="flex h-[14px] w-[10px] items-center justify-center border border-[#aaa] bg-[#d8d8d8]">
            <div className="h-0 w-0 border-x-[4px] border-t-[4px] border-x-transparent border-t-[#333]" />
          </div>
        ))}
      </div>
    </div>
  );
}

export default function App() {
  return (
    <div className="relative flex h-[656px] w-[1165px] overflow-hidden bg-[#dcdcdc] font-['Noto_Sans_CJK_SC','Liberation_Sans',sans-serif]">
      <div className="flex h-full w-[845px] shrink-0 flex-col overflow-hidden">
        <div className="flex h-[31px] shrink-0 flex-col">
          <div className="h-[2px] bg-[#0a3ea8]" />
          <div className="h-[9px] bg-gradient-to-b from-[#444] to-[#8a8a8a]" />
          <div className="flex-1 bg-[#1b1b1b] pl-[3px] text-[12px] leading-[9px] text-[#e8e8e8]">
            <span>建模 - </span>
            <span className="tracking-[0.5px]">[_model1.prt</span>
            <span> （ 修改的 ） ]</span>
          </div>
        </div>
        <div className="flex h-[23px] shrink-0 items-center overflow-hidden border-b border-[#cfcfcf] bg-[#e4e4e4] text-[12px] text-black">
          {menus.map(([m, w]) => (
            <span key={m} className={`${w} shrink-0 whitespace-nowrap`}>{m}</span>
          ))}
        </div>
        <div className="flex h-[27px] shrink-0 items-center overflow-hidden border-b border-[#c4c4c4] bg-[#dedede] pl-[1px]">
          <Row items={row1} />
        </div>
        <div className="flex h-[26px] shrink-0 items-center overflow-hidden border-b border-[#c4c4c4] bg-[#dedede]">
          <Row items={row2} />
        </div>
        <div className="flex h-[26px] shrink-0 items-center overflow-hidden border-b border-[#b4b4b4] bg-[#dcdcdc] pt-[1px]">
          <div className="-ml-[17px] flex h-full w-[634px] shrink-0 items-center border-r border-[#c4c4c4]">
            <Row items={row3} />
          </div>
        </div>
        <div className="flex h-[27px] shrink-0 items-center overflow-hidden border-b border-[#b8b8b8] bg-[#e4e4e4] pt-[1px]">
          <div className="h-[18px] w-[15px] shrink-0 rounded-r-[3px] bg-gradient-to-b from-[#3d8ee6] to-[#a6d6f8]">
            <div className="mx-auto mt-[6px] h-0 w-0 border-x-[6px] border-t-[6px] border-x-transparent border-t-[#111]" />
          </div>
          <div className="ml-[10px]">
            <TopSelect label="仅在工作部件内" width="w-[115px]" />
          </div>
          <Row items={["|"]} />
          <div className="flex w-[23px] shrink-0 justify-center"><Icon k="cen" /></div>
          <Row items={["|"]} />
          <div className="ml-[6px]">
            <TopSelect label="相切面" width="w-[115px]" />
          </div>
          <div className="flex w-[34px] shrink-0 justify-center">
            <svg viewBox="0 0 20 20" className="h-[16px] w-[16px]">
              <path d="M2 7h9V3l7 7-7 7v-4H2z" fill="#60c0e0" stroke="#2070a0" strokeWidth=".8" />
            </svg>
          </div>
          <Row items={row4} />
        </div>
        <div className="flex h-[23px] shrink-0 items-center border-b border-[#c0c0c0] bg-[#dcdcdc] text-[12px] font-bold text-black">
          <span className="w-[486px] shrink-0 whitespace-nowrap border-r border-[#f4f4f4] leading-[22px]">或小平面</span>
          <span className="whitespace-pre pl-[3px]">面  已选定</span>
        </div>
        <div className="flex min-h-0 flex-1">
          <LeftBar />
          <div className="min-w-0 flex-1">
            <Scene />
          </div>
        </div>
        <div className="flex h-[12px] shrink-0 items-start overflow-hidden bg-[#e4e4e4] pt-[3px]">
          <div className="ml-[12px] h-[12px] w-[1px] shrink-0 bg-[#222]" />
          <div className="-ml-[2px] flex h-[20px]">
            <Row items={["c2p", "cpt", "cpt", "circ", "cpt", "cpt", "sqk", "sm", "cdot"]} />
          </div>
          <div className="ml-[6px] h-[12px] w-[1px] shrink-0 bg-[#222]" />
          <div className="ml-[8px] flex h-[20px]">
            <Row items={["srf", "v", "|", "seg", "seg", "seg", "|", "gr", "v", "|", "seg", "gr", "seg", "v", "|", "sq2"]} />
          </div>
        </div>
      </div>
      <Dialog />
      <RightStrip />

      {/* red pointer from the dialog selection to the picked letter */}
      <svg viewBox="0 0 1165 656" className="pointer-events-none absolute inset-0 z-20 h-[656px] w-[1165px]">
        <path d="M856 141L362 356l10 11z" fill="#f84040" />
        <path d="M353 367l9-12 10 13z" fill="#f84040" />
        <path d="M856 141L640 235" stroke="#ff8080" strokeWidth="1" />
      </svg>

      {/* site watermark */}
      <div className="pointer-events-none absolute left-[880px] top-[560px] z-30 flex select-none items-start">
        <svg viewBox="0 0 72 84" className="h-[84px] w-[76px]">
          <path d="M36 2l34 20v40L36 82 2 62V22z" fill="#4aa8e0" opacity=".72" />
          <path d="M36 2l34 20-34 20L2 22z" fill="#e8f4fa" opacity=".45" />
          <path d="M36 24l18 10v20L36 64 18 54V34z" fill="#fff" opacity=".25" />
          <path d="M2 52l34 20 34-20" fill="none" stroke="#fff" strokeWidth="3" opacity=".7" />
        </svg>
        <div className="ml-[6px] flex flex-col text-white opacity-60">
          <span className="whitespace-nowrap text-[45px] font-bold leading-[62px]">3D世界网</span>
          <span className="whitespace-nowrap font-['Liberation_Sans'] text-[15px] font-bold tracking-[2.4px] opacity-70">WWW.3DSJW.COM</span>
        </div>
      </div>
    </div>
  );
}
